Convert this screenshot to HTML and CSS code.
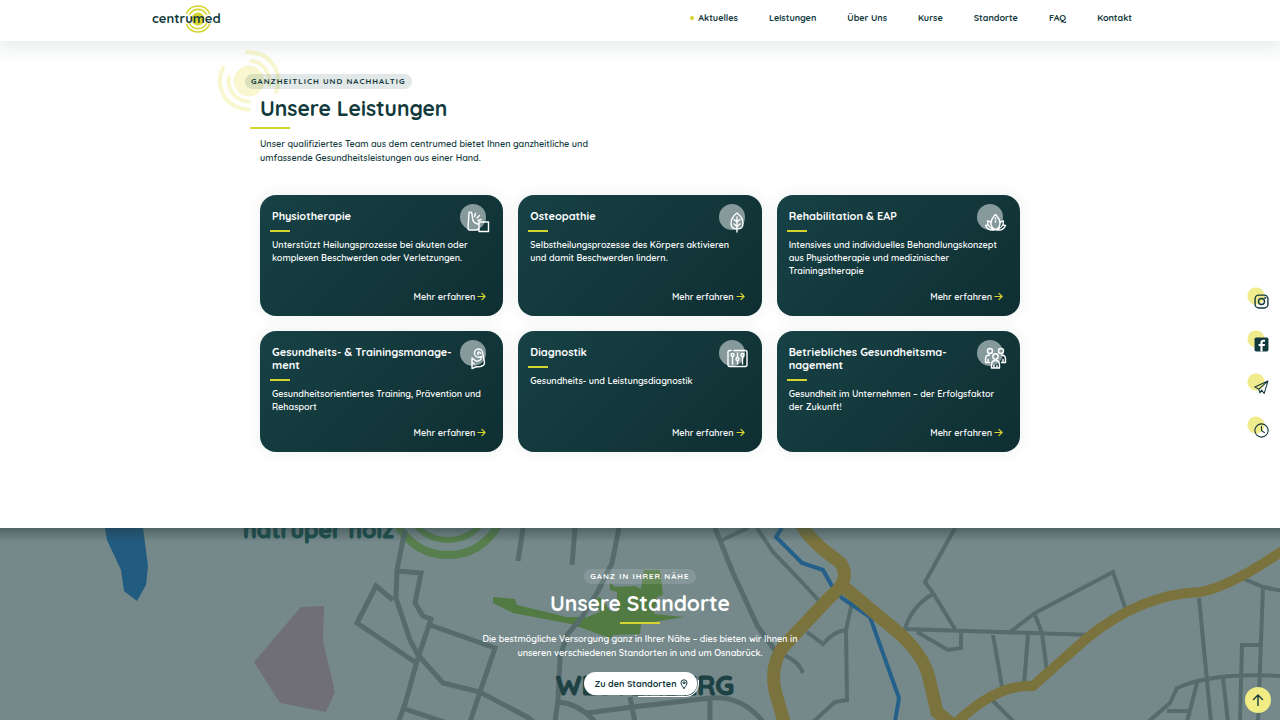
FILE: index.html
```html
<!DOCTYPE html>
<html lang="de">
<head>
<meta charset="utf-8">
<meta name="viewport" content="width=device-width, initial-scale=1">
<title>centrumed – Unsere Leistungen</title>
<link rel="stylesheet" href="styles.css">
</head>
<body>
<svg class="defs" aria-hidden="true">
  <symbol id="arrow" viewBox="0 0 10 10"><path d="M1 5h8M5.500 1.500 9 5 5.500 8.500"/></symbol>
</svg>

<header class="site-header">
  <div class="header-inner">
    <a class="logo" href="#" aria-label="centrumed">
      <svg class="logo-mark" viewBox="0 0 28 28" aria-hidden="true">
        <circle cx="14" cy="14" r="6.500" fill="#d6d52f"/>
        <g fill="none" stroke="#d6d52f" stroke-width="1.600">
          <path d="M5.500 9.500a9.600 9.600 0 0 1 17 0M5.500 18.500a9.600 9.600 0 0 0 17 0"/>
          <path d="M2.500 8.500a12.600 12.600 0 0 1 23 0M2.500 19.500a12.600 12.600 0 0 0 23 0"/>
        </g>
      </svg>
      <span class="logo-text">centrumed</span>
    </a>
    <nav class="main-nav" aria-label="Hauptnavigation">
      <a class="active" href="#">Aktuelles</a>
      <a href="#">Leistungen</a>
      <a href="#">Über Uns</a>
      <a href="#">Kurse</a>
      <a href="#">Standorte</a>
      <a href="#">FAQ</a>
      <a href="#">Kontakt</a>
    </nav>
  </div>
</header>

<main>
  <section class="services">
    <div class="intro">
      <svg class="rings" viewBox="0 0 62 62" aria-hidden="true">
        <circle cx="31" cy="31" r="15"/>
        <g fill="none" stroke-width="4">
          <path d="M29 2.500A28.500 28.500 0 0 1 58 42"/>
          <path d="M34 11A20.500 20.500 0 0 1 51 35"/>
          <path d="M5 18A28.500 28.500 0 0 0 31 59.500"/>
          <path d="M11 27A20.500 20.500 0 0 0 31 51.500"/>
        </g>
      </svg>
      <p class="chip">GANZHEITLICH UND NACHHALTIG</p>
      <h2>Unsere Leistungen</h2>
      <p class="lead">Unser qualifiziertes Team aus dem centrumed bietet Ihnen ganzheitliche und umfassende Gesundheitsleistungen aus einer Hand.</p>
    </div>

    <div class="cards">
      <article class="card">
        <svg class="card-icon" viewBox="0 0 30 30" aria-hidden="true"><circle class="disc" cx="13" cy="13" r="13"/><path d="M9 8.500c2-1 3 0 3 2l1 6c.5 2 3 3 6 4v3c0 2-1 2.500-3 2.500H9.500c-1 0-1.500-1-1.500-2zM14.500 12.500l1-3M17 14l2.500-2.500M18 16.500l3-1M19 18h9.500v9.500H19z"/></svg>
        <h3>Physiotherapie</h3>
        <p>Unterstützt Heilungsprozesse bei akuten oder komplexen Beschwerden oder Verletzungen.</p>
        <a class="more" href="#">Mehr erfahren <svg viewBox="0 0 10 10" aria-hidden="true"><use href="#arrow"/></svg></a>
      </article>
      <article class="card">
        <svg class="card-icon" viewBox="0 0 30 30" aria-hidden="true"><circle class="disc" cx="13" cy="13" r="13"/><path d="M18 9c-4 3-6 7-6 10.500 0 3 2 5.500 6 5.500s6-2.500 6-5.500C24 16 22 12 18 9zM18 13v15M15 15.500l3 2.500 3-2.500M15 20l3 2.500 3-2.500"/></svg>
        <h3>Osteopathie</h3>
        <p>Selbstheilungsprozesse des Körpers aktivieren und damit Beschwerden lindern.</p>
        <a class="more" href="#">Mehr erfahren <svg viewBox="0 0 10 10" aria-hidden="true"><use href="#arrow"/></svg></a>
      </article>
      <article class="card">
        <svg class="card-icon" viewBox="0 0 30 30" aria-hidden="true"><circle class="disc" cx="13" cy="13" r="13"/><path d="M18.500 10.500c-3 3-4.500 6-4.500 9 0 2.500 1.500 5 4.500 6 3-1 4.500-3.500 4.500-6 0-3-1.500-6-4.500-9zM14 18.500c-1-1-2-1.500-3.500-1.500 0 4 2.500 8 8 8.500 5.500-.5 8-4.500 8-8.500-1.500 0-2.500.5-3.500 1.500M11 21c-1.200 0-2 .3-2.500.5 1.500 3.500 5 5.500 10 4M26 21c1.200 0 2 .3 2.500.5-1.500 3.500-5 5.500-10 4M18.500 14v1M18.500 17v1"/></svg>
        <h3>Rehabilitation &amp; EAP</h3>
        <p>Intensives und individuelles Behandlungskonzept aus Physiotherapie und medizinischer Trainingstherapie</p>
        <a class="more" href="#">Mehr erfahren <svg viewBox="0 0 10 10" aria-hidden="true"><use href="#arrow"/></svg></a>
      </article>
      <article class="card">
        <svg class="card-icon" viewBox="0 0 30 30" aria-hidden="true"><circle class="disc" cx="13" cy="13" r="13"/><path d="M21.500 16.500c-3 1.500-6.500.5-7-2.500s1.500-5 4-5c2 0 4 1.500 4 3.500l2 10c0 2.500-1.500 3.500-4 4l-5 .5-3.500 1.500V18l4 3c3 .5 5.500-1 5.500-4.500M12 22.500l2.500 1.500M20.500 13.500c0-1-1-1.800-2-1.500s-1.200 2 0 2.300"/></svg>
        <h3>Gesundheits- &amp; Trainingsmanage&shy;ment</h3>
        <p>Gesundheitsorientiertes Training, Prävention und Rehasport</p>
        <a class="more" href="#">Mehr erfahren <svg viewBox="0 0 10 10" aria-hidden="true"><use href="#arrow"/></svg></a>
      </article>
      <article class="card">
        <svg class="card-icon" viewBox="0 0 30 30" aria-hidden="true"><circle class="disc" cx="13" cy="13" r="13"/><path d="M15 10.500h11.500a1.500 1.500 0 0 1 1.500 1.500v13a1.500 1.500 0 0 1-1.500 1.500h-16A1.500 1.500 0 0 1 9 25V12a1.500 1.500 0 0 1 1.500-1.500h1.500"/><path d="M13.500 17v7M18.500 13v4M18.500 21v3M23.500 17v7"/><circle cx="13.500" cy="15" r="1.500"/><circle cx="18.500" cy="19" r="1.500"/><circle cx="23.500" cy="15" r="1.500"/></svg>
        <h3>Diagnostik</h3>
        <p>Gesundheits- und Leistungsdiagnostik</p>
        <a class="more" href="#">Mehr erfahren <svg viewBox="0 0 10 10" aria-hidden="true"><use href="#arrow"/></svg></a>
      </article>
      <article class="card">
        <svg class="card-icon" viewBox="0 0 30 30" aria-hidden="true"><circle class="disc" cx="13" cy="13" r="13"/><circle cx="13" cy="11" r="2.500"/><circle cx="24" cy="11" r="2.500"/><circle cx="18.500" cy="16.500" r="2.700"/><path d="M14.500 28v-3c0-3 1.500-4.500 4-4.500s4 1.500 4 4.500v3zM17 25.500V28M20 25.500V28M8.500 22.500V19c0-2.500 1.500-4 4-4M8.500 22.500h4M28.500 22.500V19c0-2.500-1.500-4-4-4M28.500 22.500h-4M11 19.500v3M26 19.500v3"/></svg>
        <h3>Betriebliches Gesundheitsma&shy;nagement</h3>
        <p>Gesundheit im Unternehmen – der Erfolgsfaktor der Zukunft!</p>
        <a class="more" href="#">Mehr erfahren <svg viewBox="0 0 10 10" aria-hidden="true"><use href="#arrow"/></svg></a>
      </article>
    </div>
  </section>

  <section class="locations">
    <svg class="map" viewBox="0 528 1280 192" preserveAspectRatio="xMidYMin slice" aria-hidden="true">
      <path fill="#215b80" d="M105 528h38l5 38-2 19-9 16-13-10-3-21-14-30z"/>
      <path fill="#706f77" d="M301 607l23-1-1 35 12 51-9 20-46-9-26-41z"/>
      <g fill="none" stroke="#577f4d">
        <circle cx="448" cy="498" r="57" stroke-width="8"/>
        <circle cx="448" cy="498" r="42" stroke-width="6"/>
      </g>
      <path fill="#527a43" d="M493 597l22 2 2 6 50 12 20 0 13-5-5-12 5-3 10 14 7 1v-20l-7-2v-7l5 4 20-1 6 3 3-19h16l3 25-6 2-3 17 30 3-43 7-1 10-26 1-5 4-5-3-33-12-58-11-20-10z"/>
      <g class="roads" stroke-width="5">
        <path d="M405 530l-8 40-1 28 14 42 8 15 25 28 37 9 47 25 18 13M393 600l-17-14-19 37 58 39M397 571l24 2-6 30 8 13 8 3-14 42-12 43-7 19M430 625l65 23-15 44-10 30M405 709l42 14"/>
        <path d="M523 528l-5 33M575 528l-3 37M619 528l-7 35-15 30-15 24-15 18-7 22-2 43-3 22M715 528l18 45 25 54 19 26M558 702q22 2 37 20M587 713l46-6 77-9q32-3 53 24M630 697l5 25M710 700v22"/>
      </g>
      <g class="roads" stroke-width="4">
        <path d="M722 540l26-12M757 528l16 24 27 28 20 22M777 653q20 5 26 20M813 722l22-20 12-2-1-70 6-27M846 630q-12 1-23 14l-16-12"/>
        <path d="M955 528l-30 54 8 11 22 36M933 594q-22 12-29 38M905 629l187 6M917 632l31 18 13-2v-16M1010 632l25-19 78-41 13 38M1035 615l7 18 5 39M993 635l10 57M1028 635l-4 50M992 700l22 22"/>
        <path d="M1242 578l21 9 19 4M1263 587l-5 135M1260 645h-18l-2 77M1199 598l12 124M1282 676q-70-4-105 12l-7 15-22 19M1197 683l-10 39M1167 711h21M1223 678l5 44"/>
      </g>
      <path fill="none" stroke="#24608a" stroke-width="4" d="M782 528l-6 9 26 26 21 7 9 16 10 12 28 19 29 81-4 24"/>
      <g fill="none" stroke="#7b733d">
        <path stroke-width="13" d="M801 524q10 18 36 36 9 6 7 19-2 8-14 18l-47 50q-13 18-8 44l10 34M844 587l56 47q24 22 29 44l8 34 17 14"/>
        <path stroke-width="10" d="M957 722q40-38 76-36l54-48q55-44 113-46 30-5 82-41"/>
      </g>
      <text class="map-label district" x="243" y="538">natruper holz</text>
      <text class="map-label quarter" x="556" y="695">WESTERBERG</text>
    </svg>
    <div class="locations-inner">
      <p class="chip chip-light">GANZ IN IHRER NÄHE</p>
      <h2>Unsere Standorte</h2>
      <p class="lead">Die bestmögliche Versorgung ganz in Ihrer Nähe – dies bieten wir Ihnen in unseren verschiedenen Standorten in und um Osnabrück.</p>
      <a class="button" href="#">Zu den Standorten
        <svg viewBox="0 0 8 10" aria-hidden="true"><path d="M4 9.300C2 7 1 5.300 1 3.800a3 3 0 0 1 6 0C7 5.300 6 7 4 9.300z"/><circle cx="4" cy="3.800" r="1"/></svg>
      </a>
    </div>
  </section>
</main>

<aside class="quick" aria-label="Schnellkontakt">
  <a href="#" aria-label="Instagram"><svg viewBox="0 0 14 14"><rect x="1" y="1" width="12" height="12" rx="3.500"/><circle cx="7" cy="7" r="2.800"/><circle cx="10.500" cy="3.500" r=".4"/></svg></a>
  <a href="#" aria-label="Facebook"><svg viewBox="0 0 14 14"><rect class="solid" x=".5" y=".5" width="13" height="13" rx="1.500"/><path class="mark" d="M8 13.500V8.500h2l.3-2H8V5.400c0-.7.400-1 1-1h1.300V2.600C7.500 2.200 6 3 6 5.200v1.300H4.300v2H6v5z"/></svg></a>
  <a href="#" aria-label="Nachricht"><svg class="fine" viewBox="0 0 14 14"><path d="M13 1 .8 6.500l3.700 2L13 1 9.500 12.500 7 9.500M4.500 8.500 5.500 12 7 9.500"/></svg></a>
  <a href="#" aria-label="Öffnungszeiten"><svg class="fine" viewBox="0 0 14 14"><circle cx="7" cy="7" r="6.200"/><path d="M7 3v4l2.700 2"/></svg></a>
</aside>
<a class="to-top" href="#" aria-label="Nach oben"><svg viewBox="0 0 12 12" aria-hidden="true"><path d="M6 11.500V1M1.500 5.500 6 1l4.500 4.500"/></svg></a>
</body>
</html>
```
FILE: styles.css
```css
:root {
  --dark: #12393c;
  --lime: #d6d52f;
  --pale: #f0eb8c;
}

* { box-sizing: border-box; }

body {
  margin: 0;
  min-height: 100vh;
  display: flex;
  flex-direction: column;
  background: #fff;
  color: var(--dark);
  font-family: Quicksand, Lato, sans-serif;
  font-size: 9px;
  font-weight: 600;
  line-height: 14px;
}

a { color: inherit; text-decoration: none; }
h2, h3, p { margin: 0; }
svg { display: block; fill: none; stroke: currentColor; stroke-linecap: round; stroke-linejoin: round; }
.defs { position: absolute; width: 0; height: 0; }

.site-header {
  position: relative;
  z-index: 2;
  background: #fff;
  box-shadow: 0 0 24px 4px rgba(18, 57, 60, 0.12);
}
.header-inner {
  max-width: 1020px;
  margin: 0 auto;
  padding: 3px 18px 9px 22px;
  display: flex;
  align-items: center;
  justify-content: space-between;
}
.logo {
  position: relative;
  display: flex;
  align-items: center;
  height: 29px;
}
.logo-mark {
  position: absolute;
  top: 2px;
  left: 32px;
  width: 28px;
  height: 28px;
  stroke: none;
}
.logo-text {
  position: relative;
  font-size: 13px;
  font-weight: 700;
}
.main-nav { display: flex; flex-wrap: wrap; gap: 4px 31px; font-weight: 700; }
.main-nav a { display: flex; align-items: center; gap: 4px; }
.main-nav .active::before {
  content: "";
  width: 4px;
  height: 4px;
  border-radius: 50%;
  background: var(--lime);
}

main { flex: 1; display: flex; flex-direction: column; }

.services {
  width: 100%;
  max-width: 800px;
  margin: 0 auto;
  padding: 33px 20px 76px;
}
.intro {
  position: relative;
  display: flex;
  flex-direction: column;
  align-items: flex-start;
  margin-bottom: 30px;
}
.rings {
  position: absolute;
  left: -42px;
  top: -24px;
  width: 62px;
  height: 62px;
  fill: #f8f7cf;
  stroke: #f8f7cf;
}
.chip {
  position: relative;
  margin-left: -15px;
  padding: 0 6px;
  border-radius: 8px;
  background: rgba(18, 57, 60, 0.12);
  font-size: 8px;
  line-height: 15px;
  font-weight: 700;
  letter-spacing: 1px;
}
h2 { margin-top: 4px; font-size: 21px; line-height: 30px; font-weight: 700; }
h2::after {
  content: "";
  display: block;
  width: 40px;
  height: 2px;
  margin: 4px 0 0 -10px;
  background: var(--lime);
}
.lead { max-width: 340px; margin-top: 8px; }

.cards {
  display: grid;
  grid-template-columns: repeat(auto-fit, minmax(230px, 1fr));
  gap: 15px;
}
.card {
  position: relative;
  display: flex;
  flex-direction: column;
  min-height: 121px;
  padding: 15px 17px 13px 12px;
  border-radius: 16px;
  background: linear-gradient(135deg, #174145, #0f2f32);
  box-shadow: 0 0 16px rgba(18, 57, 60, 0.08);
  color: #fff;
  line-height: 13px;
}
.card-icon { position: absolute; top: 9px; right: 13px; width: 30px; height: 30px; stroke-width: 1.400; }
.card-icon .disc { fill: #869a9c; stroke: none; }
.card h3 { padding-right: 28px; font-size: 11px; line-height: 13px; font-weight: 700; }
.card h3::after {
  content: "";
  display: block;
  width: 20px;
  height: 2px;
  margin: 7px 0 0 -2px;
  background: var(--lime);
}
.card p { margin-top: 6px; }
.more {
  margin-top: auto;
  align-self: flex-end;
  display: flex;
  align-items: center;
  gap: 2px;
}
.more svg { width: 9px; height: 9px; color: var(--lime); stroke-width: 1.300; }

.locations {
  position: relative;
  flex: 1;
  overflow: hidden;
  background: #75898b;
  color: #fff;
}
.map { position: absolute; inset: 0; width: 100%; height: 100%; stroke: none; stroke-linejoin: miter; stroke-linecap: butt; }
.locations::before {
  content: "";
  position: absolute;
  z-index: 1;
  inset: 0 0 auto;
  height: 14px;
  background: linear-gradient(rgba(35, 55, 55, 0.45), rgba(35, 55, 55, 0));
}
.roads { fill: none; stroke: #566b6b; }
.map-label { font-weight: 700; stroke-width: 1; }
.district { fill: #1c504f; stroke: #1c504f; font-size: 23px; }
.quarter { fill: #1e4144; stroke: #1e4144; font-size: 27px; }
.locations-inner {
  position: relative;
  z-index: 2;
  display: flex;
  flex-direction: column;
  align-items: center;
  padding: 41px 20px 24px;
  text-align: center;
}
.chip-light { margin-left: 0; background: rgba(255, 255, 255, 0.12); }
.locations h2::after { margin: 4px auto 0; }
.button {
  position: relative;
  display: flex;
  align-items: center;
  gap: 3px;
  margin-top: 12px;
  padding: 0 9px 0 11px;
  border-radius: 12px;
  background: #fff;
  color: var(--dark);
  font-weight: 700;
  line-height: 23px;
}
.button::after {
  content: "";
  position: absolute;
  right: -2px;
  bottom: -2px;
  width: 60px;
  height: 16px;
  border: solid #fff;
  border-width: 0 1px 1px 0;
  border-radius: 0 0 14px 0;
}
.button svg { width: 8px; height: 10px; }

.quick {
  position: fixed;
  z-index: 3;
  right: 11px;
  top: 287px;
  display: flex;
  flex-direction: column;
  gap: 21px;
}
.quick a {
  width: 22px;
  height: 22px;
  display: flex;
  align-items: flex-end;
  justify-content: flex-end;
  background: radial-gradient(circle at 9px 9px, var(--pale) 8px, transparent 9px);
}
.quick svg { width: 15px; height: 15px; stroke-width: 1.300; }
.quick .fine { stroke-width: 1; }
.quick .solid { fill: var(--dark); stroke: none; }
.quick .mark { fill: #fff; stroke: none; }
.to-top {
  position: fixed;
  z-index: 3;
  right: 9px;
  bottom: 7px;
  width: 26px;
  height: 26px;
  display: flex;
  align-items: center;
  justify-content: center;
  border-radius: 50%;
  background: #f1ec84;
}
.to-top svg { width: 12px; height: 12px; stroke-width: 1.400; }
```
